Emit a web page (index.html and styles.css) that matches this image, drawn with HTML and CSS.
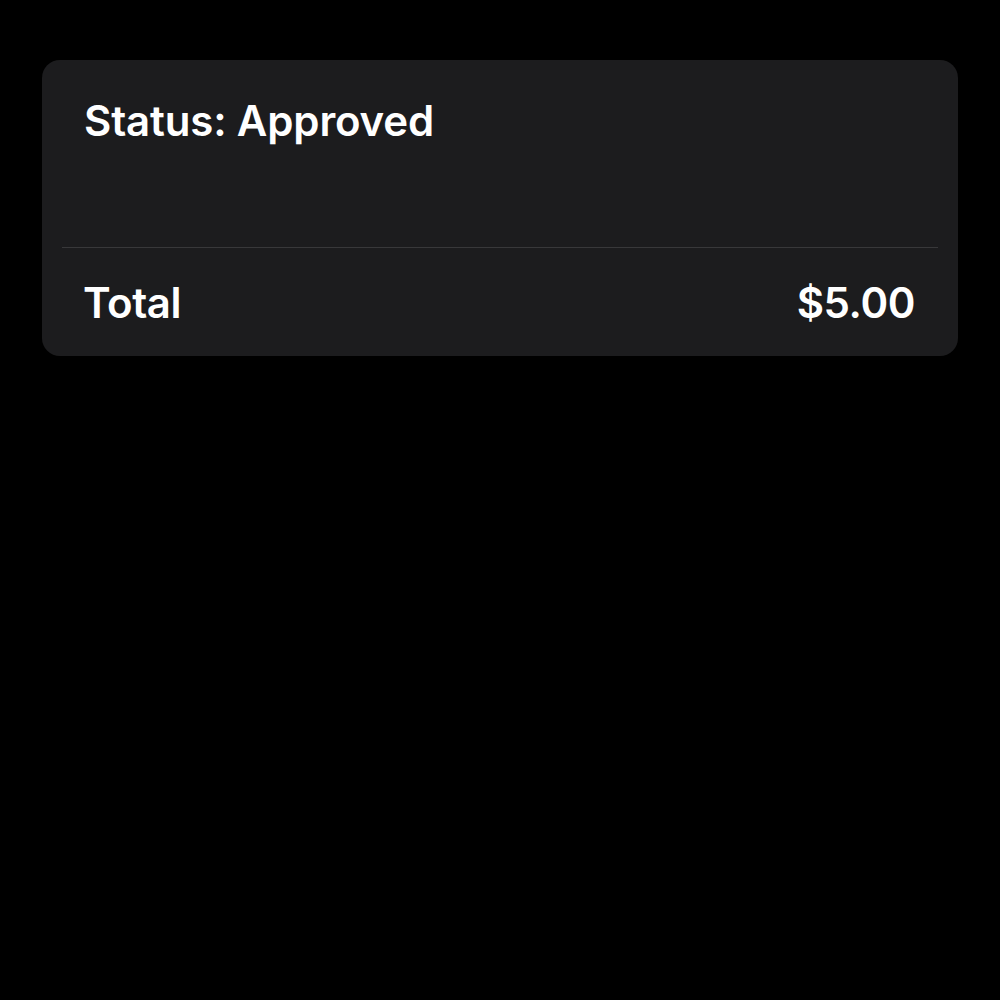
FILE: index.html
```html
<!DOCTYPE html>
<html lang="en">
<head>
    <meta charset="UTF-8">
    <meta name="viewport" content="width=device-width, initial-scale=1.0">
    <title>Receipt</title>
    <link rel="stylesheet" href="styles.css">
</head>
<body>
    <div class="card">
        <div class="card-head">
            <h1 class="status">Status: Approved</h1>
            <p class="sub">&nbsp;</p>
        </div>
        <div class="divider"></div>
        <div class="total-row">
            <span class="label">Total</span>
            <span class="amount">$5.00</span>
        </div>
    </div>
</body>
</html>
```

FILE: styles.css
```css
html, body {
    background-color: #000;
}
body {
    margin: 0;
    padding: 60px 42px;
    font-family: 'Inter', 'Liberation Sans', sans-serif;
    color: #fff;
}
.card {
    background-color: #1c1c1e;
    border-radius: 18px;
    overflow: hidden;
}
.card-head {
    height: 187px;
    padding: 34px 42px 0 42px;
    box-sizing: border-box;
}
.status {
    margin: 0;
    font-size: 42px;
    font-weight: 600;
    line-height: 54px;
    letter-spacing: -0.15px;
}
.sub {
    margin: 20px 0 0 0;
    font-size: 16px;
    color: #2a2a2c;
}
.divider {
    height: 1px;
    margin: 0 20px;
    background-color: #38383a;
}
.total-row {
    height: 108px;
    padding: 0 43px 0 41px;
    display: flex;
    align-items: center;
    justify-content: space-between;
    font-size: 42px;
    font-weight: 600;
    letter-spacing: -0.4px;
}
```
